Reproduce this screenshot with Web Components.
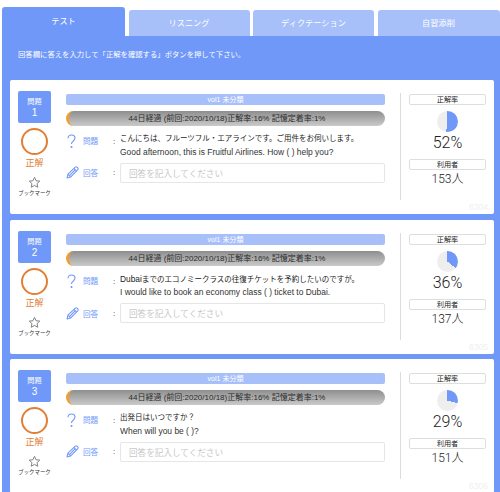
<!DOCTYPE html>
<html lang="ja">
<head>
<meta charset="utf-8">
<title>テスト</title>
<style>
  html, body { margin: 0; height: 492px; overflow: hidden; background: #fff; }
  body { font-family: "Liberation Sans", "Noto Sans CJK JP", sans-serif; }
  .lat { font-size: 8.4px; }
</style>
</head>
<body>
<study-page>
  <tab-bar slot="tabs"></tab-bar>
  <q-card num="1" percent="52" users="153" code="6304"
    en="Good afternoon, this is Fruitful Airlines. How ( ) help you?">こんにちは、フルーツフル・エアラインです。ご用件をお伺いします。</q-card>
  <q-card num="2" percent="36" users="137" code="6305"
    en="I would like to book an economy class ( ) ticket to Dubai."><span class="lat">Dubai</span>までのエコノミークラスの往復チケットを予約したいのですが。</q-card>
  <q-card num="3" percent="29" users="151" code="6306"
    en="When will you be ( )?">出発日はいつですか？</q-card>
</study-page>

<script>
class StudyPage extends HTMLElement {
    constructor() {
        super();
        this.attachShadow({ mode: 'open' });
        this.shadowRoot.innerHTML = /*html*/`
            <style>
            :host { display: block; width: 500px; }
            #panel {
                background: #7098f8;
                margin-left: 2px;
                padding: 13px 6px 0 8px;
                height: 456px;
                box-sizing: border-box;
            }
            #note {
                color: #fff;
                font-size: 7.35px;
                line-height: 12px;
                padding-left: 8px;
                margin-bottom: 19px;
            }
            #cards { display: flex; flex-direction: column; gap: 5.5px; }
            </style>
            <slot name="tabs"></slot>
            <div id="panel">
                <div id="note">回答欄に答えを入力して「正解を確認する」ボタンを押して下さい。</div>
                <div id="cards"><slot></slot></div>
            </div>
        `;
    }
}

class TabBar extends HTMLElement {
    constructor() {
        super();
        this.attachShadow({ mode: 'open' });
        this.shadowRoot.innerHTML = /*html*/`
            <style>
            :host {
                display: grid;
                grid-template-columns: 123px 121px 121px 122px;
                column-gap: 3.5px;
                align-items: end;
                height: 36px;
                padding-left: 2px;
                width: 500px;
                box-sizing: border-box;
                overflow: hidden;
            }
            div {
                height: 26px;
                line-height: 27px;
                background: #a8c0f9;
                color: #fff;
                font-size: 8.2px;
                text-align: center;
                border-radius: 3px 3px 0 0;
            }
            .on { height: 29px; line-height: 29px; background: #7098f8; }
            </style>
            <div class="on">テスト</div>
            <div>リスニング</div>
            <div>ディクテーション</div>
            <div>自習添削</div>
        `;
    }
}

class PieChart extends HTMLElement {
    connectedCallback() {
        if (this.shadowRoot) return;
        let p = this.getAttribute('percent');
        this.attachShadow({ mode: 'open' });
        this.shadowRoot.innerHTML = /*html*/`
            <style>
            :host {
                display: block;
                width: 21px;
                height: 21px;
                border-radius: 50%;
                background: conic-gradient(#7098f8 0 ${p}%, #eeeeee ${p}% 100%);
            }
            </style>
        `;
    }
}

class QCard extends HTMLElement {
    connectedCallback() {
        if (this.shadowRoot) return;
        let get = (n) => this.getAttribute(n);
        this.attachShadow({ mode: 'open' });
        this.shadowRoot.innerHTML = /*html*/`
            <style>
            * { box-sizing: border-box; }
            :host {
                display: block;
                height: 134px;
                background: #fff;
                border-radius: 2px;
                position: relative;
            }
            #wrap {
                display: grid;
                grid-template-columns: 48px 319px 24px 77px;
                height: 100%;
                padding: 11px 0 0 8px;
            }
            #side { display: flex; flex-direction: column; align-items: center; width: 33px; }
            #badge {
                width: 33px;
                height: 32px;
                background: #7098f8;
                border-radius: 2px;
                color: #fff;
                text-align: center;
                padding-top: 6px;
            }
            #badge span { display: block; font-size: 7.2px; line-height: 9px; }
            #badge b { display: block; font-weight: 400; font-size: 10px; line-height: 12px; margin-top: 1px; }
            #mark {
                width: 27px;
                height: 27px;
                margin-top: 5px;
                border: 2px solid #e27f36;
                border-radius: 50%;
                flex: none;
            }
            #result { color: #e27f36; font-size: 9px; line-height: 12px; margin-top: 2px; }
            #star { display: block; margin-top: 7px; }
            #bm { font-size: 5.4px; line-height: 7px; color: #333; white-space: nowrap; margin-top: 1px; }

            #main { padding-top: 3px; }
            #vol {
                height: 11px;
                background: #a8c0f9;
                border-radius: 2px;
                color: #fff;
                font-size: 7px;
                line-height: 11px;
                text-align: center;
            }
            #prog {
                height: 15px;
                margin-top: 6px;
                border-radius: 8px;
                overflow: hidden;
                background: linear-gradient(to bottom, #8e8e8e, #cacaca);
                border-left: 3px solid #f0a030;
                color: #2a2a2a;
                font-size: 8px;
                line-height: 15px;
                text-align: center;
                white-space: nowrap;
            }
            .row {
                display: grid;
                grid-template-columns: 17px 30px 7px 1fr;
            }
            #qrow { margin-top: 7px; }
            #arow { margin-top: 4px; align-items: center; }
            .ico { display: block; }
            #qrow .ico { margin-top: 1px; }
            .name { color: #7098f8; font-size: 7.6px; }
            #qrow .name, #qrow .colon { line-height: 15px; margin-top: 1px; }
            .colon { color: #333; font-size: 8px; }
            #text { color: #222; white-space: nowrap; }
            #ja { font-size: 7.5px; line-height: 12.5px; }
            #en { font-size: 8.45px; line-height: 13px; color: #333; }
            input {
                display: block;
                width: 100%;
                height: 20px;
                border: 1px solid #e6e6e6;
                border-radius: 2px;
                padding: 0 8px;
                font: 8.6px "Noto Sans CJK JP", sans-serif;
                background: #fff;
            }
            input::placeholder { color: #c8c8c8; opacity: 1; }

            #sep { width: 1px; height: 107px; background: #dcdcdc; margin: 2px 0 0 15px; }
            #stats { display: flex; flex-direction: column; align-items: center; padding-top: 3px; }
            .tag {
                width: 77px;
                height: 11px;
                border: 1px solid #dedede;
                border-radius: 2px;
                color: #222;
                font-size: 7.2px;
                line-height: 9px;
                text-align: center;
            }
            pie-chart { margin-top: 6px; }
            #pct { font: 300 16px/16px Roboto, "Liberation Sans", sans-serif; color: #222; margin: 3px 0 8px; }
            #users { font: 300 12px/15px Roboto, "Noto Sans CJK JP", sans-serif; color: #222; margin-top: 2px; }
            #code { position: absolute; right: 6px; bottom: 2px; color: #efefef; font-size: 8.5px; line-height: 10px; }
            </style>
            <div id="wrap">
                <div id="side">
                    <div id="badge"><span>問題</span><b>${get('num')}</b></div>
                    <div id="mark"></div>
                    <div id="result">正解</div>
                    <svg id="star" width="13" height="13" viewBox="0 0 24 24" fill="none" stroke="#808080" stroke-width="1.8" stroke-linejoin="round">
                        <path d="M12 2.5l2.9 6.2 6.8.8-5 4.6 1.3 6.7-6-3.4-6 3.4 1.3-6.700-5-4.600 6.800-.8z"/>
                    </svg>
                    <div id="bm">ブックマーク</div>
                </div>
                <div id="main">
                    <div id="vol">vol1 未分類</div>
                    <div id="prog">44日経過 (前回:2020/10/18)正解率:16% 記憶定着率:1%</div>
                    <div class="row" id="qrow">
                        <svg class="ico" width="11" height="15" viewBox="0 0 11 15" fill="none" stroke="#7098f8" stroke-width="1.1">
                            <path d="M2 4.2C2 2.2 3.6 1 5.4 1 7.4 1 9 2.3 9 4.1c0 1.5-.9 2.300-1.900 3.100C6 8 5.500 8.700 5.500 10"/>
                            <circle cx="5.5" cy="13" r=".5" fill="#7098f8"/>
                        </svg>
                        <span class="name">問題</span>
                        <span class="colon">:</span>
                        <div id="text"><div id="ja"><slot></slot></div><div id="en">${get('en')}</div></div>
                    </div>
                    <div class="row" id="arow">
                        <svg class="ico" width="13" height="13" viewBox="0 0 12 12" fill="none" stroke="#7098f8" stroke-width="1" stroke-linejoin="round">
                            <path d="M1 11l.8-3.4L8.6 1c.5-.4 1.1-.4 1.5 0l.8.8c.4.5.4 1.1 0 1.6L4.200 10.200z"/>
                            <path d="M7.300 2.300l2.500 2.500M1.900 7.700l2.300 2.400M3.400 8.600l4.700-4.700"/>
                        </svg>
                        <span class="name">回答</span>
                        <span class="colon">:</span>
                        <input type="text" placeholder="回答を記入してください">
                    </div>
                </div>
                <div id="sep"></div>
                <div id="stats">
                    <div class="tag">正解率</div>
                    <pie-chart percent="${get('percent')}"></pie-chart>
                    <div id="pct">${get('percent')}%</div>
                    <div class="tag">利用者</div>
                    <div id="users">${get('users')}人</div>
                </div>
            </div>
            <div id="code">${get('code')}</div>
        `;
    }
}

window.customElements.define('study-page', StudyPage);
window.customElements.define('tab-bar', TabBar);
window.customElements.define('pie-chart', PieChart);
window.customElements.define('q-card', QCard);
</script>
</body>
</html>
